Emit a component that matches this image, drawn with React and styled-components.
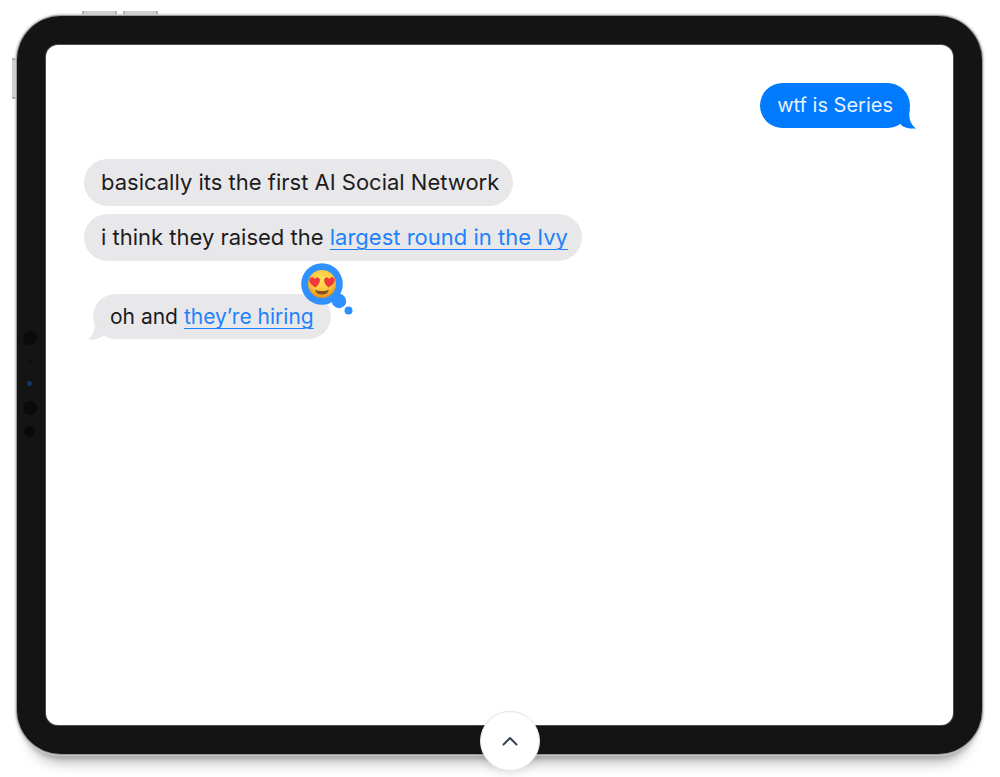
import styled, { createGlobalStyle } from "styled-components";

const GlobalStyle = createGlobalStyle`
  * {
    box-sizing: border-box;
  }
  body {
    margin: 0;
    background: #ffffff;
    font-family: Inter, "Liberation Sans", sans-serif;
  }
`;

const Page = styled.div`
  position: relative;
  min-height: 100vh;
  padding: 11px 18px 23px 12px;
  display: flex;
  flex-direction: column;
  overflow: hidden;
`;

const TopKeys = styled.div`
  display: flex;
  gap: 6px;
  padding-left: 70px;
`;

const TopKey = styled.div`
  width: 35px;
  height: 5px;
  border: solid #a9a9ab;
  border-width: 0 2px;
  border-radius: 1px;
  background: #cfcfd1;
`;

const Body = styled.div`
  flex: 1;
  display: flex;
`;

const SideKey = styled.div`
  width: 5px;
  height: 41px;
  margin-top: 42px;
  border: solid #a9a9ab;
  border-width: 2px 0;
  border-radius: 1px;
  background: #cfcfd1;
`;

const Tablet = styled.div`
  flex: 1;
  display: grid;
  grid-template-columns: 29px 1fr 29px;
  padding: 29px 0;
  border-radius: 44px;
  background: #141414;
  box-shadow:
    0 0 0 1px #9a9a9c,
    0 0 2px 2px #cfcfd1,
    0 6px 5px -2px rgba(0, 0, 0, 0.2),
    0 20px 14px -12px rgba(0, 0, 0, 0.3);
`;

const Sensors = styled.div`
  display: flex;
  flex-direction: column;
  align-items: center;
  justify-content: center;
  padding: 0 4px 2px 0;
`;

const Sensor = styled.span`
  width: ${(props) => props.$size}px;
  height: ${(props) => props.$size}px;
  margin-bottom: ${(props) => props.$gap || 0}px;
  border-radius: 50%;
  background: ${(props) => props.$color || "#0a0a0b"};
`;

const Screen = styled.main`
  display: flex;
  flex-direction: column;
  padding: 38px 43px 38px 38px;
  border-radius: 12px;
  background: #ffffff;
  box-shadow: 0 0 0 1px #4a4d4b;
`;

const Sent = styled.div`
  display: flex;
  justify-content: flex-end;
  margin-bottom: 31px;
`;

const Received = styled.div`
  display: flex;
  flex-direction: column;
  align-items: flex-start;
  gap: 8px;
`;

const Bubble = styled.p`
  margin: 0;
  padding: 0 14px 0 17px;
  border-radius: 24px;
  background: #e8e8ea;
  color: #1c1c1e;
  font-size: 22px;
  line-height: 47px;
`;

const TailBubble = styled(Bubble)`
  position: relative;
  padding: 0 17px;
  font-size: 21px;
  line-height: 45px;
`;

const SentBubble = styled(TailBubble)`
  background: #007aff;
  color: #e6f2ff;
  font-size: 20px;
`;

const LastBubble = styled(TailBubble)`
  margin: 25px 0 0 9px;
`;

const Tail = styled.svg`
  position: absolute;
  bottom: -1px;
  ${(props) => (props.$left ? "left: -5px; transform: scaleX(-1);" : "right: -6px;")}
`;

const Link = styled.a`
  color: #1f82fb;
  text-decoration: underline;
  text-decoration-thickness: 1px;
  text-underline-offset: 4px;
`;

const Reaction = styled.svg`
  position: absolute;
  top: -31px;
  right: -22px;
`;

const UpButton = styled.button`
  position: absolute;
  left: 51%;
  bottom: 6px;
  display: flex;
  align-items: center;
  justify-content: center;
  width: 60px;
  height: 60px;
  margin-left: -30px;
  padding: 0;
  border: 1px solid #e2e4ea;
  border-radius: 50%;
  background: #ffffff;
  box-shadow: 0 4px 8px rgba(0, 0, 0, 0.08);
  cursor: pointer;
`;

const BubbleTail = ({ left, color }) => (
  <Tail $left={left} width="18" height="20" viewBox="0 0 18 20" aria-hidden="true">
    <path d="M12 0C10 8 12 15 18 19.500C12 20 7 19 3 16L0 8Z" fill={color} />
  </Tail>
);

const HeartEyes = () => (
  <Reaction width="52" height="52" viewBox="0 0 52 52" role="img" aria-label="heart eyes">
    <defs>
      <radialGradient id="face" cx="0.5" cy="0.35" r="0.65">
        <stop offset="0" stopColor="#ffe55c" />
        <stop offset="0.65" stopColor="#fcc53a" />
        <stop offset="1" stopColor="#e58a1c" />
      </radialGradient>
    </defs>
    <g fill="#2e91ff">
      <circle cx="21" cy="21" r="20.8" />
      <circle cx="38" cy="38" r="7.2" />
      <circle cx="47.5" cy="47.5" r="4" />
    </g>
    <circle cx="21" cy="21" r="14" fill="url(#face)" />
    <path
      d="M14.500 24.500C10.500 22 8 19.500 8.300 16.500C8.800 14 12 13.500 13.600 16C15.200 13.500 18.800 14 19 17C19 20 16.500 22.500 14.500 24.500Z"
      fill="#ee3a3c"
    />
    <path
      d="M27.500 24.500C31.500 22 34 19.500 33.700 16.500C33.200 14 30 13.500 28.400 16C26.800 13.500 23.200 14 23 17C23 20 25.500 22.500 27.500 24.500Z"
      fill="#ee3a3c"
    />
    <path d="M14 26.500C18 28.500 24 28.500 28 26.500C27.500 29.500 25 31.500 21 31.500C17 31.500 14.500 29.500 14 26.500Z" fill="#86501f" />
  </Reaction>
);

const App = () => {
  return (
    <>
      <GlobalStyle />
      <Page>
        <TopKeys>
          <TopKey />
          <TopKey />
        </TopKeys>
        <Body>
          <SideKey />
          <Tablet>
            <Sensors>
              <Sensor $size={14} $gap={15} />
              <Sensor $size={4} $gap={17} $color="#0f0f10" />
              <Sensor $size={5} $gap={15} $color="#123868" />
              <Sensor $size={14} $gap={11} />
              <Sensor $size={11} />
            </Sensors>
            <Screen>
              <Sent>
                <SentBubble>
                  wtf is Series
                  <BubbleTail color="#007aff" />
                </SentBubble>
              </Sent>
              <Received>
                <Bubble>basically its the first AI Social Network</Bubble>
                <Bubble>
                  i think they raised the <Link href="#round">largest round in the Ivy</Link>
                </Bubble>
                <LastBubble>
                  oh and <Link href="#hiring">they’re hiring</Link>
                  <BubbleTail left color="#e8e8ea" />
                  <HeartEyes />
                </LastBubble>
              </Received>
            </Screen>
          </Tablet>
        </Body>
        <UpButton type="button" aria-label="Show more">
          <svg width="16" height="10" viewBox="0 0 16 10" fill="none" aria-hidden="true">
            <path
              d="M1.500 8.500L8 2L14.500 8.500"
              stroke="#364152"
              strokeWidth="2"
              strokeLinecap="round"
              strokeLinejoin="round"
            />
          </svg>
        </UpButton>
      </Page>
    </>
  );
};

export default App;
